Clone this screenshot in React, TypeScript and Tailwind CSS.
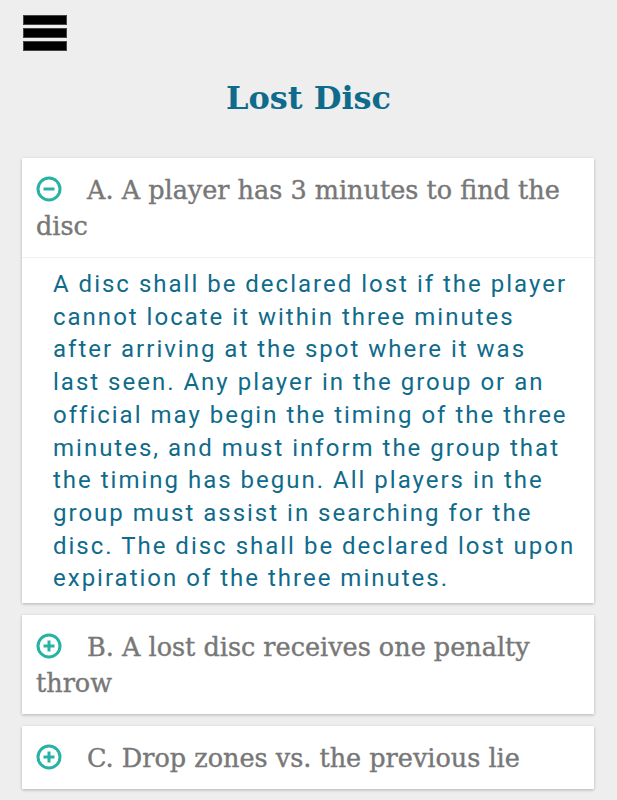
import React, { useState } from "react";

const items = [
  {
    title: "A. A player has 3 minutes to find the disc",
    body: "A disc shall be declared lost if the player cannot locate it within three minutes after arriving at the spot where it was last seen. Any player in the group or an official may begin the timing of the three minutes, and must inform the group that the timing has begun. All players in the group must assist in searching for the disc. The disc shall be declared lost upon expiration of the three minutes.",
  },
  { title: "B. A lost disc receives one penalty throw", body: "" },
  { title: "C. Drop zones vs. the previous lie", body: "" },
];

const CircleIcon = ({ open }: { open: boolean }) => (
  <svg width="26" height="26" viewBox="0 0 26 26" className="inline-block align-[-3px] mr-[25px]">
    <circle cx="13" cy="13" r="11" fill="none" stroke="#26b3a3" strokeWidth="3" />
    <line x1="7.5" y1="13" x2="18.5" y2="13" stroke="#26b3a3" strokeWidth="3" />
    {!open && <line x1="13" y1="7.5" x2="13" y2="18.5" stroke="#26b3a3" strokeWidth="3" />}
  </svg>
);

const App = () => {
  const [openIdx, setOpenIdx] = useState(0);

  return (
    <div className="min-h-[800px] bg-[#eeeeee] pt-[15px] pb-4">
      <div className="pl-[23px]">
        <div className="flex w-[44px] flex-col gap-[3px]">
          <div className="h-[10px] border border-[#444] bg-black" />
          <div className="h-[10px] border border-[#444] bg-black" />
          <div className="h-[10px] border border-[#444] bg-black" />
        </div>
      </div>
      <h1 className="mt-[27px] text-center font-['DejaVu_Serif',serif] text-[32px] font-bold leading-[40px] text-[#0f6b8b]">
        Lost Disc
      </h1>
      <div className="mt-[40px] flex flex-col gap-3 pl-[22px] pr-[23px]">
        {items.map((it, i) => (
          <div key={i} className="bg-white shadow-[0_1px_3px_rgba(0,0,0,0.25)]">
            <button
              onClick={() => setOpenIdx(openIdx === i ? -1 : i)}
              className="block w-full px-[14px] pt-[14px] pb-[13px] text-left font-['DejaVu_Serif',serif] text-[25.5px] leading-[36px] text-[#777777] [-webkit-text-stroke:0.4px_#777777]"
            >
              <CircleIcon open={openIdx === i} />
              {it.title}
            </button>
            {openIdx === i && it.body && (
              <div className="border-t border-[#f0f0f0] pt-[10px] pb-[8px] pl-[31px] pr-[14px] font-['Roboto',sans-serif] text-[24px] leading-[32.7px] tracking-[2px] text-[#0f6b8b]">
                {it.body}
              </div>
            )}
          </div>
        ))}
      </div>
    </div>
  );
};

export default App;
